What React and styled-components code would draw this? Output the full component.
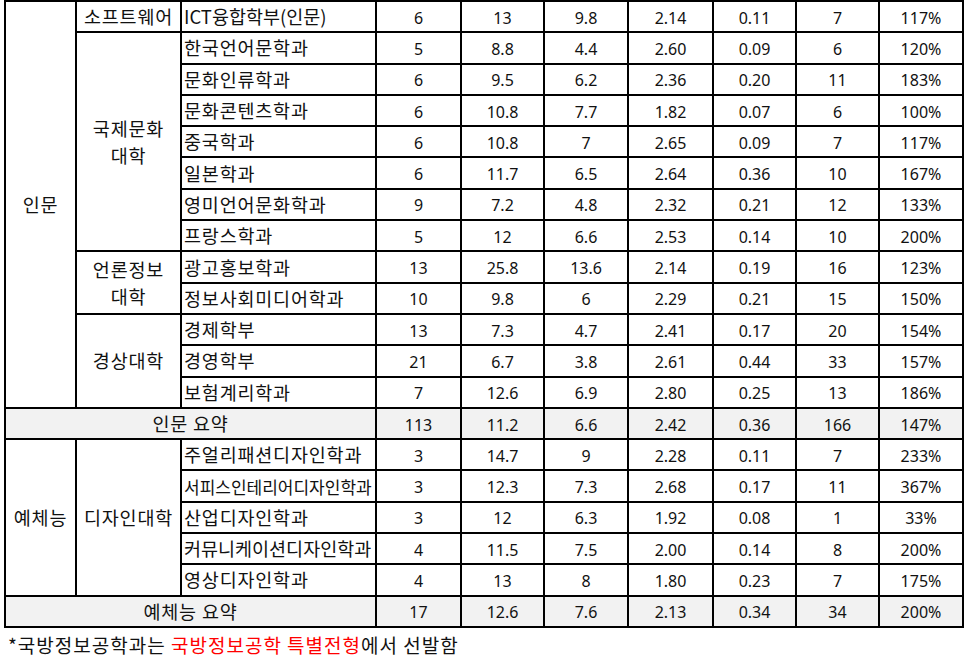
import React from "react";
import styled, { createGlobalStyle } from "styled-components";

const GlobalStyle = createGlobalStyle`
	body {
		margin: 0;
		background: #fff;
		font-family: "Noto Sans", "Noto Sans CJK KR", sans-serif;
		color: #111;
	}
`;

const Page = styled.div`
	padding: 0 4px;
	width: 958px;
`;

const Table = styled.table`
	border-collapse: collapse;
	table-layout: fixed;
	width: 958px;
`;

const Row = styled.tr`
	height: 31.3px;
	background: ${(p) => (p.$summary ? "#f2f2f2" : "#fff")};
`;

const Cell = styled.td`
	border: 2px solid #000;
	padding: ${(p) => (p.$left ? "0 0 0 2px" : "0")};
	text-align: ${(p) => (p.$left ? "left" : "center")};
	vertical-align: middle;
	font-family: "Noto Sans CJK KR", "Noto Sans", sans-serif;
	font-size: ${(p) => p.$size || 18.5}px;
	letter-spacing: ${(p) => (p.$ls === undefined ? 0.8 : p.$ls)}px;
	line-height: ${(p) => (p.$stack ? 27 : 21)}px;
	white-space: nowrap;
	overflow: hidden;
`;

const Num = styled.td`
	border: 2px solid #000;
	padding: 2px 0 0;
	text-align: center;
	vertical-align: middle;
	font-family: "Noto Sans", sans-serif;
	font-size: 16px;
	line-height: 20px;
`;

const Footnote = styled.p`
	margin: 0;
	padding: 5px 0 0 4px;
	font-family: "Noto Sans CJK KR", "Noto Sans", sans-serif;
	font-size: 19px;
	letter-spacing: 1px;
	line-height: 24px;
`;

const Red = styled.span`
	color: #f00;
`;

const widths = [71, 105, 195, 85, 83, 84, 85, 83, 83, 84];

const humanities = [
	{ college: "소프트웨어", span: 1, rows: [["ICT융합학부(인문)", "6", "13", "9.8", "2.14", "0.11", "7", "117%"]] },
	{
		college: ["국제문화", "대학"],
		span: 7,
		rows: [
			["한국언어문학과", "5", "8.8", "4.4", "2.60", "0.09", "6", "120%"],
			["문화인류학과", "6", "9.5", "6.2", "2.36", "0.20", "11", "183%"],
			["문화콘텐츠학과", "6", "10.8", "7.7", "1.82", "0.07", "6", "100%"],
			["중국학과", "6", "10.8", "7", "2.65", "0.09", "7", "117%"],
			["일본학과", "6", "11.7", "6.5", "2.64", "0.36", "10", "167%"],
			["영미언어문화학과", "9", "7.2", "4.8", "2.32", "0.21", "12", "133%"],
			["프랑스학과", "5", "12", "6.6", "2.53", "0.14", "10", "200%"],
		],
	},
	{
		college: ["언론정보", "대학"],
		span: 2,
		rows: [
			["광고홍보학과", "13", "25.8", "13.6", "2.14", "0.19", "16", "123%"],
			["정보사회미디어학과", "10", "9.8", "6", "2.29", "0.21", "15", "150%"],
		],
	},
	{
		college: "경상대학",
		span: 3,
		rows: [
			["경제학부", "13", "7.3", "4.7", "2.41", "0.17", "20", "154%"],
			["경영학부", "21", "6.7", "3.8", "2.61", "0.44", "33", "157%"],
			["보험계리학과", "7", "12.6", "6.9", "2.80", "0.25", "13", "186%"],
		],
	},
];

const arts = [
	{
		college: "디자인대학",
		span: 5,
		rows: [
			["주얼리패션디자인학과", "3", "14.7", "9", "2.28", "0.11", "7", "233%"],
			["서피스인테리어디자인학과", "3", "12.3", "7.3", "2.68", "0.17", "11", "367%"],
			["산업디자인학과", "3", "12", "6.3", "1.92", "0.08", "1", "33%"],
			["커뮤니케이션디자인학과", "4", "11.5", "7.5", "2.00", "0.14", "8", "200%"],
			["영상디자인학과", "4", "13", "8", "1.80", "0.23", "7", "175%"],
		],
	},
];

// long department names are shrunk to fit, as in the sheet
const deptFit = (name) => {
	if (name.length >= 12) return { $size: 17, $ls: 0 };
	if (name.length >= 11) return { $size: 18.5, $ls: 0 };
	return {};
};

const Group = ({ label, colleges, total }) => {
	const groupSpan = colleges.reduce((n, c) => n + c.span, 0);
	const out = [];
	colleges.forEach((c, ci) => {
		const stacked = Array.isArray(c.college);
		c.rows.forEach((r, ri) => {
			out.push(
				<Row key={`${ci}-${ri}`}>
					{ci === 0 && ri === 0 && <Cell rowSpan={groupSpan}>{label}</Cell>}
					{ri === 0 && (
						<Cell rowSpan={c.span} $stack={stacked}>
							{stacked ? (
								<>
									{c.college[0]}
									<br />
									{c.college[1]}
								</>
							) : (
								c.college
							)}
						</Cell>
					)}
					<Cell $left {...deptFit(r[0])}>
						{r[0]}
					</Cell>
					{r.slice(1).map((v, i) => (
						<Num key={i}>{v}</Num>
					))}
				</Row>
			);
		});
	});
	out.push(
		<Row key="sum" $summary>
			<Cell colSpan={3}>{label} 요약</Cell>
			{total.map((v, i) => (
				<Num key={i}>{v}</Num>
			))}
		</Row>
	);
	return out;
};

const App = () => {
	return (
		<Page>
			<GlobalStyle />
			<Table>
				<colgroup>
					{widths.map((w, i) => (
						<col key={i} style={{ width: w }} />
					))}
				</colgroup>
				<tbody>
					<Group label="인문" colleges={humanities} total={["113", "11.2", "6.6", "2.42", "0.36", "166", "147%"]} />
					<Group label="예체능" colleges={arts} total={["17", "12.6", "7.6", "2.13", "0.34", "34", "200%"]} />
				</tbody>
			</Table>
			<Footnote>
				*국방정보공학과는 <Red>국방정보공학 특별전형</Red>에서 선발함
			</Footnote>
		</Page>
	);
};

export default App;
